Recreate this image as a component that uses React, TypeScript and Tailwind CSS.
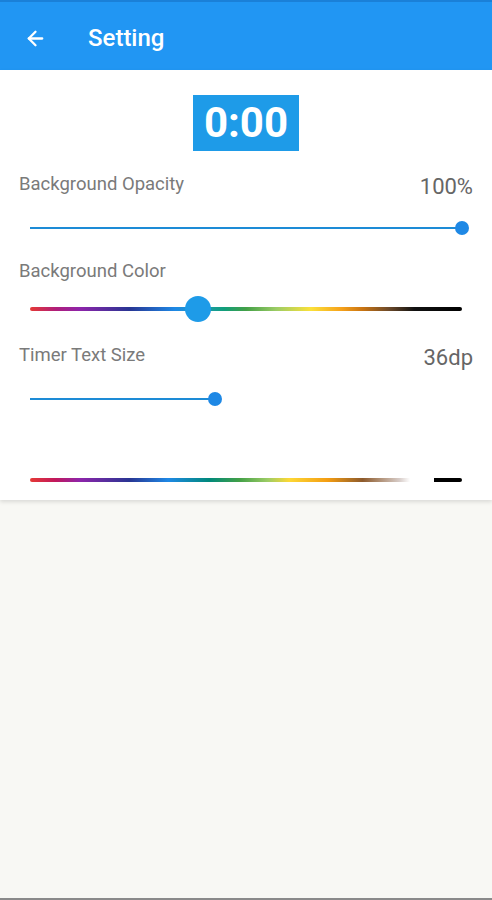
import { ArrowLeft } from "lucide-react";

interface SliderProps {
  value: number;
  track: string;
  thumb: string;
  fill?: boolean;
}

function Slider({ value, track, thumb, fill = false }: SliderProps) {
  return (
    <div className="relative mx-[11px] flex h-[30px] items-center">
      <div className={`w-full ${track}`} style={fill ? { width: `${value}%` } : undefined} />
      <div
        className={`absolute top-1/2 -translate-x-1/2 -translate-y-1/2 rounded-full ${thumb}`}
        style={{ left: `${value}%` }}
      />
    </div>
  );
}

export default function App() {
  return (
    <div className="flex h-[900px] flex-col bg-[#f8f8f4] font-['Roboto',sans-serif]">
      <header className="flex h-[70px] shrink-0 items-center border-t-2 border-[#1a80d8] bg-[#2196f3] pt-[4px] text-white shadow-sm">
        <ArrowLeft className="ml-[24px] h-[23px] w-[23px]" strokeWidth={2.4} />
        <h1 className="ml-[41px] text-[24px] font-medium leading-none">Setting</h1>
      </header>

      <main className="bg-white px-[19px] pt-[25px] pb-[5px] shadow-[0_2px_4px_rgba(0,0,0,0.12)]">
        <div className="flex justify-center">
          <div className="flex h-[56px] w-[106px] items-center justify-center bg-[#1e9be8] text-[42px] font-bold leading-none text-white">
            0:00
          </div>
        </div>

        <div className="mt-[24px] flex items-start justify-between">
          <span className="text-[18.5px] leading-none text-[#7a7a7a]">Background Opacity</span>
          <span className="mt-[1px] text-[22px] leading-none text-[#666]">100%</span>
        </div>
        <div className="mt-[15px]">
          <Slider value={100} track="h-[2px] bg-[#1d8bd6]" thumb="h-[14px] w-[14px] bg-[#1e88e5]" />
        </div>

        <div className="mt-[19px] text-[18.5px] leading-none text-[#7a7a7a]">Background Color</div>
        <div className="mt-[13px]">
          <Slider
            value={39}
            track="h-[4px] rounded-full bg-[linear-gradient(to_right,#e53935_0%,#b01e7a_6%,#8e24aa_11.5%,#283593_23%,#1e88e5_33.5%,#1f9ac9_38%,#129e7a_45%,#43a047_50%,#9ccc65_57%,#fbe13a_65%,#f6a21b_72%,#c97412_77%,#6d4a2a_83%,#111_89%,#000_100%)]"
            thumb="h-[26px] w-[26px] bg-[#1e9be8]"
          />
        </div>

        <div className="mt-[22px] flex items-start justify-between">
          <span className="text-[18.5px] leading-none text-[#7a7a7a]">Timer Text Size</span>
          <span className="mt-[1px] text-[22px] leading-none text-[#666]">36dp</span>
        </div>
        <div className="mt-[15px]">
          <Slider value={42.8} fill track="h-[2px] bg-[#1d8bd6]" thumb="h-[14px] w-[14px] bg-[#1e88e5]" />
        </div>

        <div className="mt-[51px] mx-[11px] flex h-[30px] items-center">
          <div className="h-[4px] w-full rounded-full bg-[linear-gradient(to_right,#e53935_0%,#c2185b_5.8%,#8e24aa_11.5%,#283593_23%,#1e88e5_32%,#00897b_41.5%,#43a047_48.5%,#9ccc65_55%,#fdd835_60%,#f39c12_69%,#8d5a2b_77%,#d7ccc8_85.5%,#fff_88%,#fff_93.5%,#000_93.6%,#000_100%)]" />
        </div>
      </main>

      <div className="flex-1" />
      <div className="h-[2px] bg-[#8a8a8a]" />
    </div>
  );
}
